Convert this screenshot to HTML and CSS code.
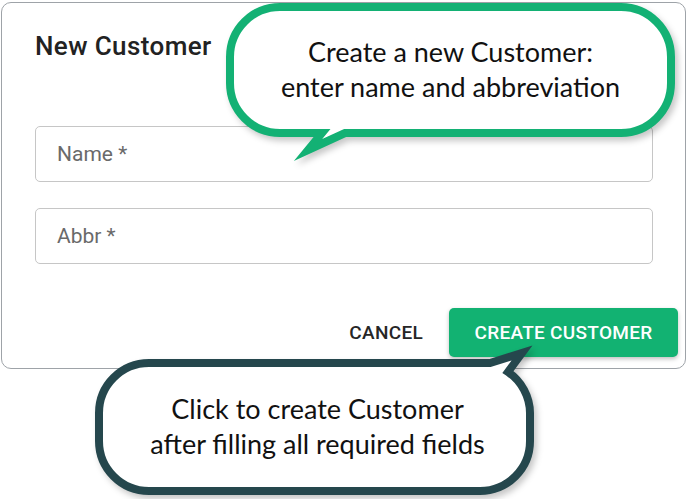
FILE: index.html
```html
<!DOCTYPE html>
<html lang="en">
<head>
<meta charset="utf-8">
<title>New Customer</title>
<link rel="stylesheet" href="styles.css">
</head>
<body>
<div class="page">
  <div class="card">
    <h2 class="title">New Customer</h2>
    <div class="fields">
      <div class="field"><span class="placeholder">Name *</span></div>
      <div class="field"><span class="placeholder">Abbr *</span></div>
    </div>
    <div class="actions">
      <button class="btn btn-text">CANCEL</button>
      <button class="btn btn-primary">CREATE CUSTOMER</button>
    </div>
  </div>

  <div class="callout callout-green">
    <svg class="callout-shape" width="460" height="165" viewBox="222 0 460 165">
      <path d="M 280 7 H 621 A 50 50 0 0 1 671 57 V 83 A 50 50 0 0 1 621 133 H 345 L 308 150 L 322 133 H 280 A 50 50 0 0 1 230 83 V 57 A 50 50 0 0 1 280 7 Z"/>
    </svg>
    <div class="callout-text">Create a new Customer:<br>enter name and abbreviation</div>
  </div>

  <div class="callout callout-dark">
    <svg class="callout-shape" width="450" height="159" viewBox="90 340 450 159">
      <path d="M 149 363 H 490 L 522 353 L 508 372 A 50 50 0 0 1 530 413 V 441 A 50 50 0 0 1 480 491 H 149 A 50 50 0 0 1 99 441 V 413 A 50 50 0 0 1 149 363 Z"/>
    </svg>
    <div class="callout-text">Click to create Customer<br>after filling all required fields</div>
  </div>
</div>
</body>
</html>
```

FILE: styles.css
```css
* { box-sizing: border-box; }
html, body {
  margin: 0;
  padding: 0;
  background: #ffffff;
}
.page {
  position: relative;
  width: 686px;
  height: 499px;
  overflow: hidden;
  font-family: Roboto, "Liberation Sans", sans-serif;
}
.card {
  margin: 2px 0 0 1px;
  width: 685px;
  height: 367px;
  border: 1px solid #9ea3a8;
  border-radius: 10px;
  background: #fff;
  display: flex;
  flex-direction: column;
  padding: 0 7px 0 33px;
}
.title {
  margin: 28px 0 0 0;
  font-size: 26px;
  font-weight: 500;
  letter-spacing: 0.4px;
  line-height: 30px;
  color: #222;
}
.fields {
  margin-top: 65px;
  display: flex;
  flex-direction: column;
  gap: 26px;
  width: 618px;
}
.field {
  height: 56px;
  border: 1px solid #c6c6c6;
  border-radius: 5px;
  display: flex;
  align-items: center;
  padding-left: 21px;
}
.placeholder {
  font-size: 21px;
  color: #6a6a6a;
}
.actions {
  margin-top: 44px;
  display: flex;
  justify-content: flex-end;
  align-items: center;
  gap: 26px;
}
.btn {
  font-family: Roboto, "Liberation Sans", sans-serif;
  font-weight: 500;
  font-size: 19px;
  letter-spacing: 0.3px;
  border: none;
  background: none;
  padding: 0;
  cursor: pointer;
}
.btn-text {
  color: #262626;
}
.btn-primary {
  width: 229px;
  height: 49px;
  background: #12b272;
  color: #fff;
  border-radius: 5px;
  box-shadow: 0 2px 4px rgba(0,0,0,0.25);
}
.callout {
  position: absolute;
}
.callout-shape {
  position: absolute;
  left: 0;
  top: 0;
  overflow: visible;
  filter: drop-shadow(3px 4px 3px rgba(0,0,0,0.22));
}
.callout-shape path {
  fill: #fff;
  stroke-width: 8;
  stroke-linejoin: miter;
  stroke-miterlimit: 10;
}
.callout-green {
  left: 222px;
  top: 0;
  width: 460px;
  height: 165px;
}
.callout-green path { stroke: #13b174; }
.callout-dark {
  left: 90px;
  top: 340px;
  width: 450px;
  height: 159px;
}
.callout-dark path { stroke: #25474d; }
.callout-text {
  position: absolute;
  display: flex;
  align-items: center;
  justify-content: center;
  text-align: center;
  font-family: Lato, "Open Sans", sans-serif;
  font-size: 27px;
  line-height: 35px;
  color: #111;
}
.callout-green .callout-text {
  left: 8px;
  top: 6px;
  width: 441px;
  height: 126px;
}
.callout-dark .callout-text {
  left: 12px;
  top: 22px;
  width: 431px;
  height: 128px;
}
```
